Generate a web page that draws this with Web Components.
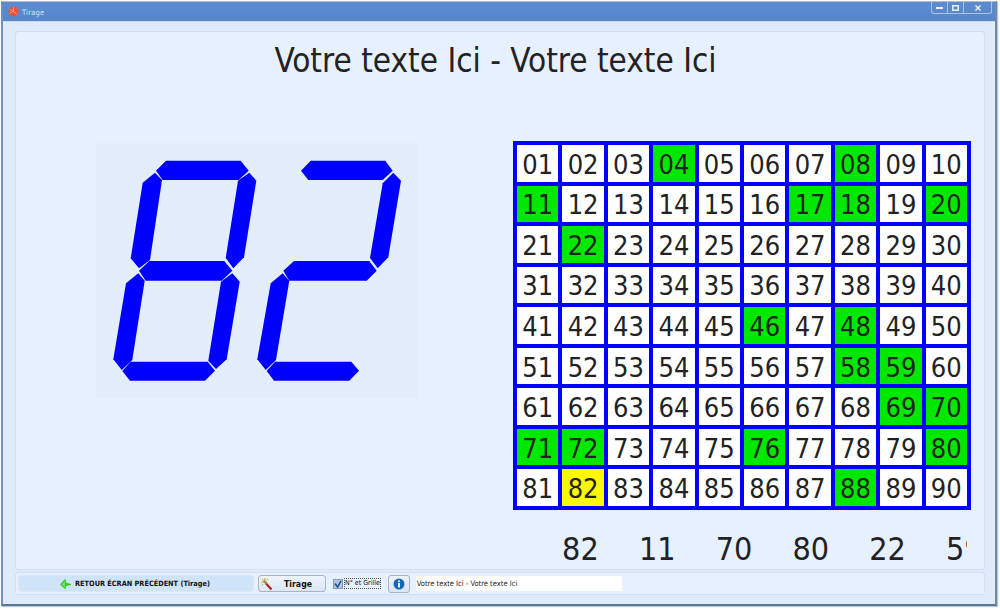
<!DOCTYPE html>
<html lang="fr"><head><meta charset="utf-8"><title>Tirage</title>
<style>
html,body{margin:0;padding:0;background:#fff;width:1000px;height:609px;overflow:hidden}
body{font-family:"DejaVu Sans Condensed","DejaVu Sans",sans-serif;color:#222}
</style></head><body>
<x-window>
  <x-title-bar slot="bar">Tirage</x-title-bar>
  <x-panel>
    <x-heading>Votre texte Ici - Votre texte Ici</x-heading>
    <x-stage><x-segments></x-segments><x-number-grid></x-number-grid></x-stage>
    <x-draws></x-draws>
  </x-panel>
  <x-toolbar slot="foot"></x-toolbar>
</x-window>
<script>
function def(name,css,html,init){
  customElements.define(name,class extends HTMLElement{
    constructor(){super();const r=this.attachShadow({mode:'open'});r.innerHTML='<style>'+css+'</style>'+html;if(init)init(r,this);}
  });
}
def('x-window',`
:host{display:flex;flex-direction:column;box-sizing:border-box;width:996px;height:605px;margin:1px 0 0 1px;background:#dfeafa;border:1px solid #9aa6b6;border-top-color:#b9bec6;border-bottom:2px solid #5d7691;border-right:2px solid #6f8aa8;border-left:2px solid #6e8fbb;box-shadow:1px 1px 1px #b9c4d0}
.c{flex:1;display:flex;flex-direction:column;padding:9px 10px 0 12px;border-top:1px solid #c9d9ef;min-height:0}
`,`<slot name="bar"></slot><div class="c"><slot></slot><slot name="foot"></slot></div>`);
def('x-title-bar',`
:host{display:flex;align-items:flex-start;height:19px;background:linear-gradient(#5a8bd0,#5887cb);color:#d5e2f3;font-size:7.5px;padding-left:4px;flex:none}
svg{display:block}
.ic{margin:4px 3px 0 1px;width:11px;height:11px}
.t{margin-top:6px;flex:1;letter-spacing:.2px}
.btns{display:flex;height:11px;margin-right:3px;border:1px solid #a9c3e4;border-top:0;border-radius:0 0 3px 3px}
.b{display:flex;align-items:center;justify-content:center;height:11px;border-right:1px solid #a9c3e4}
.b:last-child{border:0}
`,`<svg class="ic" viewBox="0 0 12 12"><circle cx="6" cy="6" r="5.500" fill="#e8533a"/><path d="M6 1v5l3.500 3M2 4l4 2M1.500 8 6 6" stroke="#f59c86" stroke-width="1" fill="none"/></svg>
<span class="t"><slot></slot></span>
<div class="btns">
<div class="b" style="width:15px"><svg width="7" height="2"><rect width="7" height="2" fill="#e9f1fb"/></svg></div>
<div class="b" style="width:15px"><svg width="7" height="6"><rect x=".75" y=".75" width="5.500" height="4.500" fill="none" stroke="#e9f1fb" stroke-width="1.500"/></svg></div>
<div class="b" style="width:27px"><svg width="6" height="6"><path d="M.5.5l5 5M5.500.5l-5 5" stroke="#eef4fc" stroke-width="1.400"/></svg></div>
</div>`);
def('x-panel',`
:host{display:flex;flex-direction:column;box-sizing:border-box;height:539px;flex:none;background:#e6f0fe;border:1px solid #d3e0f1;border-radius:3px;overflow:hidden}
`,`<slot></slot>`);
def('x-heading',`
:host{display:block;box-sizing:border-box;height:109px;padding:10px 9px 0 0;text-align:center;font-size:33px;line-height:38px;color:#222;flex:none}
`,`<slot></slot>`);
def('x-stage',`
:host{display:flex;align-items:flex-start;padding-left:80px;flex:none}
::slotted(x-segments){margin-top:2px}
::slotted(x-number-grid){margin-left:95px}
`,`<slot></slot>`);
const segs=[
'166,160.7 240.7,160.7 248.7,170.7 238.7,180 162.7,180 156,170.7',
'155,172.7 162,180 150,260 139,268.3 130.7,258.3 142.7,182.7',
'249.3,172.7 256.3,180.7 244,257.3 233.3,268.3 225.7,258 238,180.7',
'149.3,261 224.3,261 232.3,270.7 221.7,280.7 145.7,280.7 139,270.7',
'138.3,273.3 144.7,280.7 132.3,360 121.7,370 113.3,359.3 126,283.3',
'232.3,273.3 239.7,281.7 226.7,359.3 216,369 208.3,360.7 221,281.7',
'130.7,361.7 207.7,361.7 215,370.7 205,380.7 130,380.7 122.3,371',
'310.7,160.7 385.3,160.7 392.7,170.7 382.7,180 308.3,180 301,170.7',
'393.3,172.7 401,180.7 388.3,257.3 377.7,268.3 370,258 382.7,183.3',
'294,261 369.3,261 376.7,270.7 366.7,280.7 289.3,280.7 283.3,270.7',
'282.7,273.3 289.3,280.7 276,360 265.7,370 257.3,359.3 270.7,283.3',
'275,361.7 351.3,361.7 359,370.7 349.3,380.7 274,380.7 266.7,371'];
def('x-segments',`
:host{display:block;width:322px;height:255px;background:#e3edfc;flex:none}
svg{display:block}
`,`<svg width="322" height="255" viewBox="96 143 322 255">${segs.map(p=>`<polygon points="${p}" fill="#0000fe"/>`).join('')}</svg>`);
const green=new Set([4,8,11,17,18,20,22,46,48,58,59,69,70,71,72,76,80,88]);
def('x-number-grid',`
:host{display:grid;box-sizing:border-box;width:458px;height:369px;flex:none;grid-template-columns:repeat(10,1fr);grid-template-rows:repeat(9,1fr);gap:3.6px 4px;padding:4px;background:#0000fe}
div{display:flex;align-items:center;justify-content:center;background:#fff;font-size:27px;color:#222;line-height:1;min-width:0;padding-top:2px;box-sizing:border-box;overflow:hidden}
.g{background:#00e800}.y{background:#fff800}
`,Array.from({length:90},(_,i)=>{const n=i+1,s=String(n).padStart(2,'0');return `<div class="${n===82?'y':green.has(n)?'g':''}">${s}</div>`}).join(''));
def('x-draws',`
:host{display:flex;box-sizing:border-box;margin:20px 0 0 526px;width:425px;height:38px;overflow:hidden;flex:none;font-size:32px;line-height:38px;color:#222}
span{flex:0 0 76.8px;text-align:center;white-space:nowrap}
`,['82','11','70','80','22','59'].map(n=>`<span>${n}</span>`).join(''));
def('x-toolbar',`
:host{display:flex;align-items:center;box-sizing:border-box;height:23px;margin-top:2px;flex:none;background:#e6f0fe;border:1px solid #d3e0f1;border-radius:3px;padding:0 2px;font-size:7.3px;color:#111}
button{font:inherit;color:inherit;padding:0;box-sizing:border-box;display:flex;align-items:center;border-radius:3px;height:17px}
svg{display:block;flex:none}
.back{width:236px;justify-content:center;gap:3px;background:#cfe4f9;border:1px solid #dce7f4;font-weight:bold;padding-right:4px}
.tir{width:68px;margin-left:4px;background:linear-gradient(#eef4fb,#dbe7f5);border:1px solid #a8b3c0;font-weight:bold;font-size:8.7px;padding-left:1px;gap:9px}
.chk{display:flex;align-items:center;margin-left:7px}
.box{width:10px;height:10px;background:#a9c6e6;border:1px solid #8499b3;box-sizing:border-box}
.lab{margin-left:1px;border:1px dotted #555;padding:0;line-height:9px;font-size:7px;white-space:nowrap}
.info{width:22px;height:18px;margin-left:7px;justify-content:center;background:linear-gradient(#eef4fb,#dbe7f5);border:1px solid #a8b3c0}
.inp{margin-left:6px;width:206px;height:15px;box-sizing:border-box;background:#fff;line-height:15px;padding-left:1px;font-size:7.5px;color:#222}
`,`<button class="back"><svg width="14" height="14" viewBox="0 0 14 14"><path d="M7.500 1.500 2 7.500l5.500 5 .5-3.500 5-1V7L8 5.500z" fill="#35c92f"/><path d="M7 4 3.500 7.500 7 10.500V7.500z" fill="#7be05c"/></svg><span>RETOUR ÉCRAN PRÉCÉDENT (Tirage)</span></button>
<button class="tir"><svg width="15" height="14" viewBox="0 0 15 14"><path d="M6 6.500 11.500 12.500" stroke="#a5281c" stroke-width="2.200"/><path d="M2 2l1 1M5 1v2M8 2 7 3M1 5h2M2 8l1-1" stroke="#d9b23a" stroke-width="1.200"/><path d="M3.500 3.500 6.500 6.500" stroke="#8f9f50" stroke-width="2.500"/></svg><span>Tirage</span></button>
<label class="chk"><div class="box"><svg width="8" height="8" viewBox="0 0 8 8"><path d="M1 3.500 3.500 7 7 .8" fill="none" stroke="#1f4f8a" stroke-width="1.500"/></svg></div><span class="lab">N° et Grille</span></label>
<button class="info"><svg width="12" height="12" viewBox="0 0 12 12"><circle cx="6" cy="6" r="5.500" fill="#1668bb"/><circle cx="6" cy="3.200" r="1" fill="#fff"/><rect x="5.100" y="5" width="1.800" height="4.500" fill="#fff"/></svg></button>
<div class="inp">Votre texte Ici - Votre texte Ici</div>`);
</script>
</body></html>
